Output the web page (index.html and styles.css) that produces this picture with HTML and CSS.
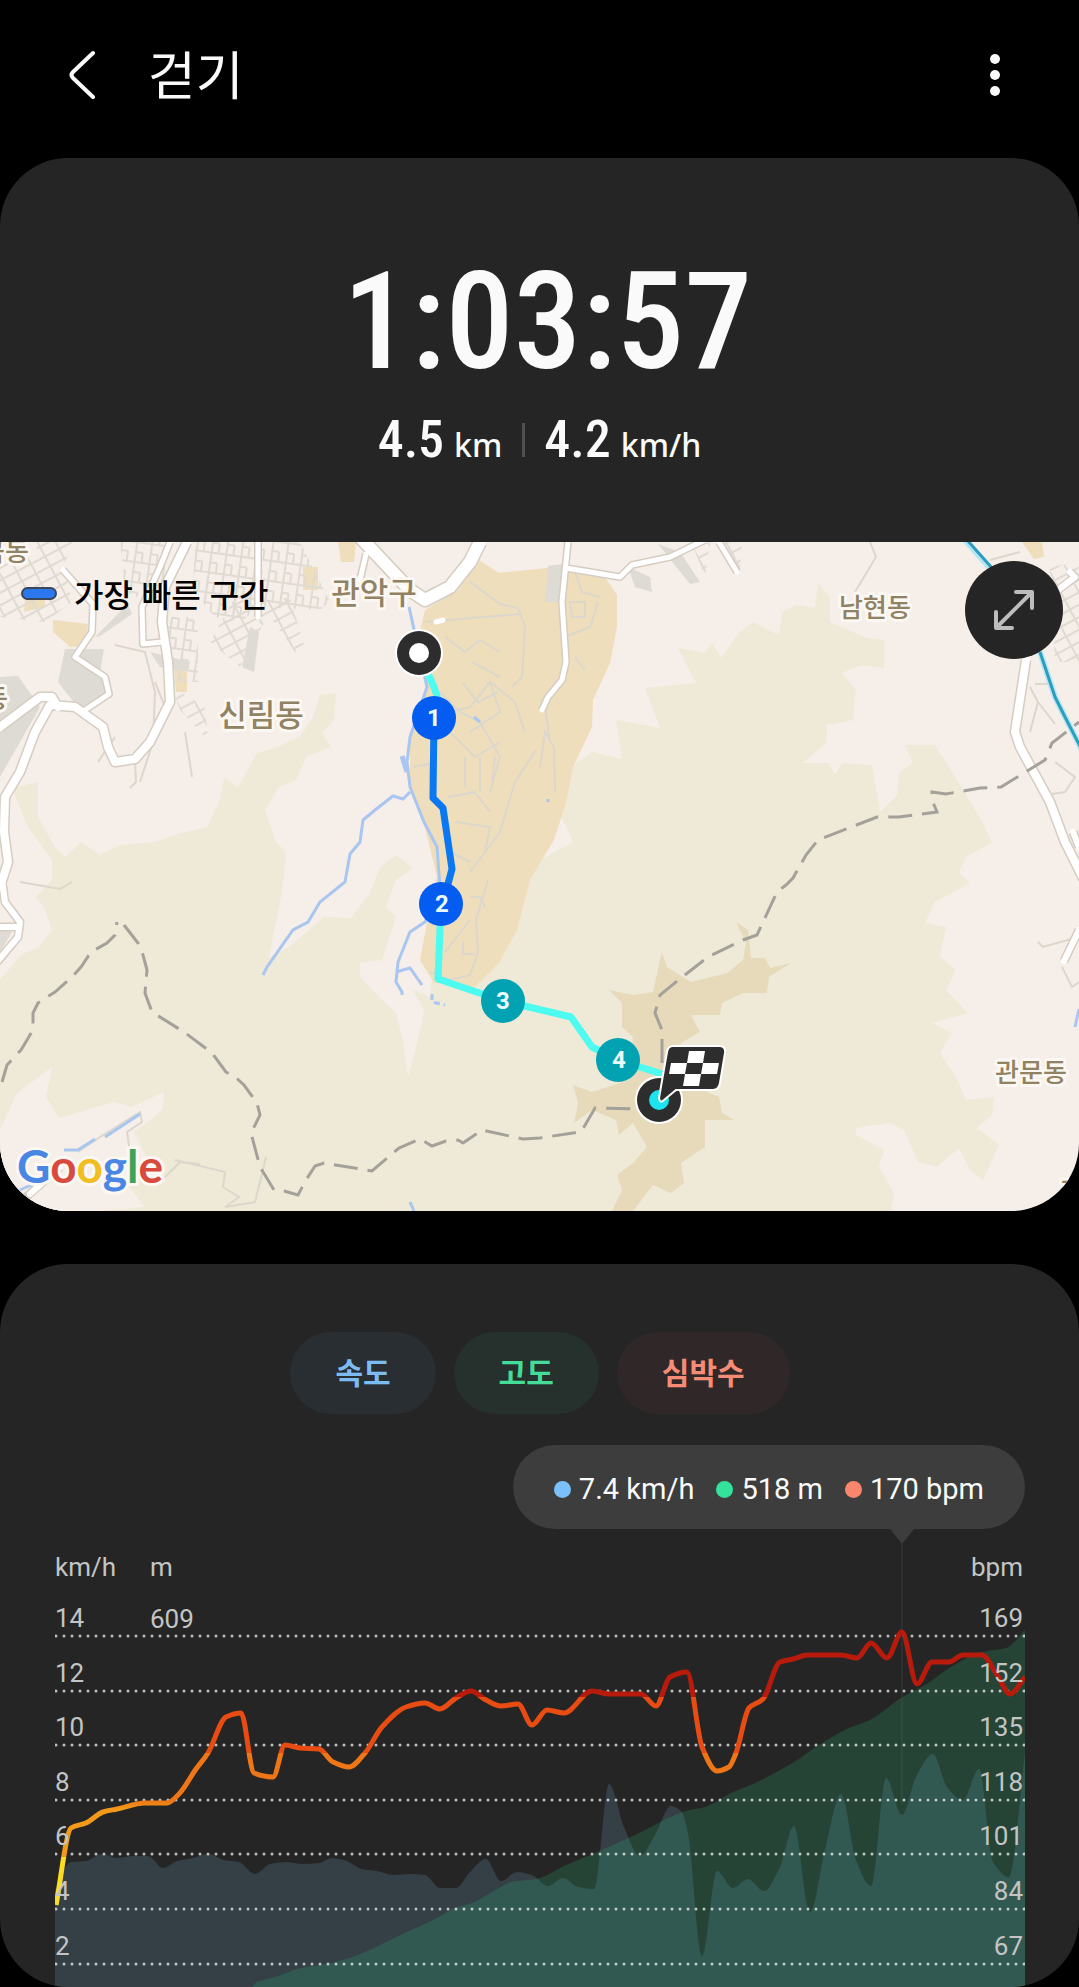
FILE: index.html
```html
<!DOCTYPE html>
<html lang="ko">
<head>
    <meta charset="UTF-8">
    <meta name="viewport" content="width=device-width, initial-scale=1.0">
    <title>걷기</title>
    <link rel="stylesheet" href="styles.css">
</head>
<body>
    <header class="topbar">
        <button class="icon-button" type="button" aria-label="뒤로">
            <svg width="28" height="50" viewBox="0 0 28 50"><path d="M25 3 L5 22 Q2 25 5 28 L25 47" fill="none" stroke="#fafafa" stroke-width="4" stroke-linecap="round" stroke-linejoin="round"/></svg>
        </button>
        <h1>걷기</h1>
        <button class="icon-button more" type="button" aria-label="더보기">
            <svg width="12" height="44" viewBox="0 0 12 44" fill="#fafafa"><circle cx="6" cy="6" r="5"/><circle cx="6" cy="22" r="5"/><circle cx="6" cy="38" r="5"/></svg>
        </button>
    </header>

    <main>
        <section class="card workout">
            <div class="summary">
                <div class="time">1:03:57</div>
                <div class="stats">
                    <div class="stat">4.5 <span>km</span></div>
                    <div class="stat">4.2 <span>km/h</span></div>
                </div>
            </div>

            <div class="map">
                <svg class="map-canvas" viewBox="0 0 1079 669">
                    <defs>
                        <pattern id="streets" width="15" height="20" patternUnits="userSpaceOnUse" patternTransform="rotate(8)">
                            <path d="M0 1H15M1 0V20M0 11H8M8 11V20" fill="none" stroke="#dfdad2" stroke-width="2"/>
                        </pattern>
                        <pattern id="streets2" width="16" height="11" patternUnits="userSpaceOnUse" patternTransform="rotate(-28)">
                            <path d="M0 1H16M1 0V11" fill="none" stroke="#dfdad2" stroke-width="2"/>
                        </pattern>
                    </defs>
                    <rect width="1079" height="669" fill="#f6eee8"/>

                    <!-- forest -->
                    <path fill="#efead7" d="M0 438 L15 420 22 412 38 406 52 388 44 366 36 355 52 338 52 318 28 285 12 246 38 240 38 275 55 305 65 315 81 300 100 313 120 303 155 300 182 291 207 285 220 258 224 236 238 245 257 211 275 206 300 195 313 175 320 153 336 151 334 178 322 191 331 205 306 215 296 238 279 245 265 268 275 298 286 311 284 336 281 355 269 415 289 405 324 375 351 376 370 351 380 325 396 313 413 326 396 338 386 365 396 375 382 418 360 421 360 435 375 451 396 471 403 498 408 535 413 518 422 481 424 468 413 448 430 455 434 420 540 318 573 300 560 271 571 225 592 210 622 217 616 178 660 186 645 146 696 141 678 106 705 111 712 100 721 116 739 91 753 80 779 93 782 70 796 63 815 66 818 41 830 55 830 80 867 96 885 98 884 126 861 123 842 131 856 148 853 178 827 183 827 200 803 221 829 221 835 233 842 221 872 223 880 270 897 253 899 231 913 220 904 203 935 203 951 228 983 281 992 301 966 315 959 331 970 341 935 360 925 381 946 385 940 415 956 428 946 448 968 471 932 481 952 491 940 511 956 535 966 558 994 555 992 573 977 586 999 603 983 638 970 628 959 606 937 625 918 620 904 588 889 581 856 586 856 593 884 608 879 625 894 651 891 669 0 669Z"/>
                    <path fill="#f6eee8" d="M0 588 L17 551 52 525 46 555 59 576 114 560 131 565 164 550 162 568 134 591 150 621 124 638 145 665 100 669 0 669Z"/>
                    <!-- campus -->
                    <path fill="#eedebb" d="M425 68 L458 48 479 18 499 31 547 26 605 35 617 53 617 85 610 121 593 158 592 185 573 225 566 261 554 298 540 321 530 338 517 388 499 421 475 445 434 441 420 418 427 381 437 335 424 281 410 245 410 198 427 145 418 98Z"/>
                    <path fill="#eedebb" d="M303 25H318V48H303Z M338 0H356L354 20 341 20Z M53 78L88 82 86 104 70 105 53 90Z M174 126H187V150H176Z M26 50H45V65L24 70Z M1022 0H1042L1044 15 1034 17Z"/>
                    <!-- summit -->
                    <path fill="#e6dabb" d="M662 410 L667 425 691 440 727 431 743 418 746 401 736 380 748 388 751 416 765 416 770 426 791 421 769 435 767 451 743 451 722 461 720 473 691 473 700 490 681 501 677 538 719 555 722 571 734 578 705 578 705 605 681 621 684 641 671 651 653 643 633 669 612 669 622 648 617 633 633 621 647 605 633 581 619 593 616 578 592 568 574 581 578 561 573 543 592 550 629 538 633 495 622 485 622 461 609 448 633 453 653 450Z"/>
                    <!-- built-up blocks -->
                    <path fill="#dedad4" d="M65 107 L104 107 100 130 112 155 80 168 58 140Z M0 135 L18 134 40 165 0 235Z M548 24 L562 22 562 60 545 60Z M628 25 L650 35 652 50 635 45Z M95 95L128 62 132 72 100 94Z M242 125L250 85 259 90 254 130Z M0 388L12 390 0 410Z M150 110L190 120 188 128 160 125Z M658 2L680 10 700 40 690 42Z"/>
                    <!-- street grids -->
                    <path fill="url(#streets)" d="M195 0 L300 0 330 60 320 68 260 65 240 80 215 75 193 50Z M165 75H198V140H165Z M120 0H165V65L125 50Z"/>
                    <path fill="url(#streets2)" d="M0 20 L60 8 72 60 45 80 0 75Z M30 0H72L62 30Z M210 100L235 55 270 70 240 125Z M260 60L290 55 306 110 295 110Z M692 2L710 0 705 35Z M724 0H742L740 30 735 32Z M1050 25L1079 20V120H1055Z M172 145L205 165 208 198 180 168Z"/>

                    <!-- small streets -->
                    <g fill="none" stroke="#dcd7cc" stroke-width="2">
                        <path d="M425 80L485 75 520 72 M470 40L500 62 518 66 525 85 522 135 512 145 M430 175L470 165 490 140 515 160 525 190 M440 150L460 170 480 180 500 215 490 250 M462 140L478 160 498 150 M450 190L475 215 500 200 M445 95L465 110 480 98 500 110 M472 120L500 135 M413 225L430 222 430 240 M448 255L475 250 490 270 M455 280L490 285 485 310 M470 330L500 290 515 240 536 208 M480 215V250M465 215V245M495 215L492 240 M450 310L470 320 M490 140L500 170 470 190 M540 225L545 190 554 205 555 250 M545 165L550 200"/>
                        <path d="M488 338L476 378 478 410 470 433 450 438 430 430 M445 410L470 378 M463 400V412H474 M470 355H480L485 365"/>
                        <path d="M565 95L590 85 598 60 M575 30L582 50 600 55 M570 60H585V75H572Z M575 115L585 128"/>
                        <path d="M115 103L145 110 155 150 153 200 140 240 M185 190L192 235 M115 195L98 220 M135 220L136 240 130 246 M155 140L165 165"/>
                        <path d="M870 0L876 15 855 50 M1030 145L1038 160 1030 190 M1038 160L1055 182 M1035 142H1050 M990 18L1020 10 M1055 220L1075 235 1065 250 1052 252"/>
                        <path d="M1038 400L1043 405 1075 396 M1062 425L1072 445 1079 440"/>
                        <path d="M20 340L60 347 72 340 M165 635L180 620 200 622 M175 618L225 630 223 645 239 655 225 665 255 660 266 615"/>
                        <path d="M78 610L100 595 140 570 142 580 127 590 130 610"/>
                    </g>

                    <!-- water -->
                    <g fill="none" stroke="#a9c6f1" stroke-width="3">
                        <path d="M409 65 L427 145 410 195 407 220 410 245 424 280 437 305 440 345 425 380 410 390 398 420 396 440 402 450 402 453"/>
                        <path d="M410 250L403 257 393 254 375 268 363 278 360 300 350 312 345 340 320 360 308 380 293 388 267 425 263 433"/>
                        <path d="M396 430L410 426 422 443"/>
                        <path d="M432 452V460L445 463" stroke-dasharray="6 4"/>
                        <path d="M402 214L407 230" stroke-width="5"/>
                        <path d="M105 595L140 572 M64 608H78L95 597 M20 648L60 630"/>
                        <path d="M474 175L480 180M548 257V260M410 660L414 669M1079 467L1075 485"/>
                    </g>

                    <!-- main roads: casing then fill -->
                    <g fill="none" stroke="#d5cdc2" stroke-linejoin="round">
                        <path stroke-width="11" d="M187 0 L165 45 162 80 168 120 170 160 150 200 135 217 115 220 108 205 103 185 75 165 50 163 35 190 20 230 5 255 4 290 8 320 0 345 M0 185L40 155 52 155 58 165"/>
                        <path stroke-width="15" d="M360 -5 L410 48 425 58 450 45 470 20 480 0"/>
                        <path stroke-width="8" d="M63 28 L93 62 92 90 75 115 105 135 109 152 85 168 M170 0L160 25 142 65 143 102 162 100 M258 0V75 M366 12L360 38"/>
                        <path stroke-width="8" d="M568 0 L562 60 566 120 562 138 548 155 542 168 M566 26L620 35 632 23 670 15 705 -2 M719 0L737 30"/>
                        <path stroke-width="11" d="M1026 118 L1015 190 1020 205 1050 260 1065 300 1085 340"/>
                        <path stroke-width="9" d="M1058 48L1075 35 1070 30 M2 338L5 360 20 380 18 395 -3 420 M-3 385H17 M1079 388L1064 419 M1073 290L1079 305"/>
                        <path stroke-width="9" d="M25 656L60 625"/>
                    </g>
                    <g fill="none" stroke="#ffffff" stroke-linejoin="round" stroke-linecap="round">
                        <path stroke-width="8" d="M187 0 L165 45 162 80 168 120 170 160 150 200 135 217 115 220 108 205 103 185 75 165 50 163 35 190 20 230 5 255 4 290 8 320 0 345 M0 185L40 155 52 155 58 165"/>
                        <path stroke-width="12" d="M360 -5 L410 48 425 58 450 45 470 20 480 0"/>
                        <path stroke-width="5" d="M63 28 L93 62 92 90 75 115 105 135 109 152 85 168 M170 0L160 25 142 65 143 102 162 100 M258 0V75 M366 12L360 38 M436 80L443 78"/>
                        <path stroke-width="5" d="M568 0 L562 60 566 120 562 138 548 155 542 168 M566 26L620 35 632 23 670 15 705 -2 M719 0L737 30"/>
                        <path stroke-width="8" d="M1026 118 L1015 190 1020 205 1050 260 1065 300 1085 340"/>
                        <path stroke-width="6" d="M1058 48L1075 35 1070 30 M2 338L5 360 20 380 18 395 -3 420 M-3 385H17 M1079 388L1064 419 M1073 290L1079 305"/>
                        <path stroke-width="6" d="M30 652L60 625"/>
                    </g>

                    <!-- subway line -->
                    <g fill="none">
                        <path d="M965 -2L990 26 M1040 110L1055 155 1065 175 1083 210" stroke="#b5e6f5" stroke-width="6"/>
                        <path d="M967 -2L992 26 M1040 110L1055 155 1065 175 1083 210" stroke="#2b9dbd" stroke-width="3"/>
                    </g>

                    <!-- district borders -->
                    <g fill="none" stroke="#a3a199" stroke-width="3" stroke-dasharray="24 10">
                        <path d="M2 540 L7 523 21 508 33 488 33 471 38 461 55 450 72 435 81 425 91 410 107 401 115 393 117 380"/>
                        <path d="M124 383 L138 401 143 413 147 428 145 451 152 470 184 490 212 511 226 530 234 534 244 543 257 561 260 573 251 591 260 625 274 648 284 649 298 653 306 638 315 624 324 621 372 629 399 606 420 597 432 604 446 599 458 598 463 601 482 588 523 597 540 596 573 591 581 590 595 566 636 567 662 558"/>
                        <path d="M662 521 L662 488 655 471 660 453 681 436 708 415 743 398 757 393 777 350 786 343 793 336 806 313 818 298 877 275 899 275 937 270 932 258 932 250 946 252 980 246 1001 245 1045 218 1052 201 1079 180"/>
                    </g>

                    <g class="place">
                        <text x="374" y="62" font-size="31">관악구</text>
                        <text x="261" y="184" font-size="31">신림동</text>
                        <text x="875" y="75" font-size="26">남현동</text>
                        <text x="1031" y="540" font-size="26">관문동</text>
                        <text x="5" y="19" font-size="26">곡동</text>
                        <text x="-4" y="166" font-size="26">동</text>
                        <text x="1084" y="658" font-size="26">과천</text>
                    </g>

                    <!-- walked route -->
                    <g fill="none" stroke-width="7" stroke-linejoin="round">
                        <path d="M419 111L434 145 439 160 M441 362L438 437 503 459 571 475 592 505 618 518 662 532" stroke="#4dfbf0"/>
                        <path d="M434 176L433 256 443 266 452 327 448 342 441 362" stroke="#0b78f2"/>
                    </g>
                    <circle cx="419" cy="111" r="24" fill="#fff"/>
                    <circle cx="419" cy="111" r="22" fill="#2d2d2d"/>
                    <circle cx="419" cy="111" r="10" fill="#fff"/>
                    <circle cx="659" cy="558" r="24" fill="#fff"/>
                    <circle cx="659" cy="558" r="22" fill="#2d2d2d"/>
                    <circle cx="659" cy="558" r="10" fill="#1de3f0"/>
                    <path d="M673 504 H719 Q726 504 725 511 L720 541 Q719 548 713 548 H676 L664 558 Q660 562 659 556 L667 510 Q668 504 673 504Z" fill="#2d2d2d" stroke="#fff" stroke-width="2"/>
                    <path fill="#fff" d="M689 509H705L703 521H687Z M671 521H687L685 532H669Z M703 521H719L717 532H701Z M685 532H701L699 544H683Z"/>
                    <g class="pin">
                        <circle cx="434" cy="176" r="22" fill="#055cf0"/>
                        <circle cx="441" cy="362" r="22" fill="#055cf0"/>
                        <circle cx="503" cy="459" r="22" fill="#02a2b3"/>
                        <circle cx="618" cy="518" r="22" fill="#02a2b3"/>
                        <text x="434" y="184">1</text>
                        <text x="442" y="370">2</text>
                        <text x="503" y="467">3</text>
                        <text x="619" y="526">4</text>
                    </g>
                </svg>

                <div class="legend"><span class="legend-line"></span>가장 빠른 구간</div>
                <button class="expand" type="button" aria-label="지도 확대">
                    <svg width="42" height="42" viewBox="0 0 42 42"><path d="M4 38L38 4M23 3H39V19M3 23V39H19" fill="none" stroke="#bdbdbd" stroke-width="4" stroke-linecap="round" stroke-linejoin="round"/></svg>
                </button>
                <div class="google"><span class="b">G</span><span class="r">o</span><span class="y">o</span><span class="b">g</span><span class="g">l</span><span class="r">e</span></div>
            </div>
        </section>

        <section class="card graph">
            <div class="chips">
                <button class="chip speed" type="button">속도</button>
                <button class="chip altitude" type="button">고도</button>
                <button class="chip heart" type="button">심박수</button>
            </div>

            <div class="tooltip">
                <span class="value speed">7.4 km/h</span>
                <span class="value altitude">518 m</span>
                <span class="value heart">170 bpm</span>
            </div>

            <svg class="chart" viewBox="0 0 970 458">
                <defs>
                    <linearGradient id="zones" gradientUnits="userSpaceOnUse" x1="0" y1="0" x2="0" y2="400">
                        <stop offset="0.42" stop-color="#b81b0b"/>
                        <stop offset="0.42" stop-color="#e84c12"/>
                        <stop offset="0.56" stop-color="#e84c12"/>
                        <stop offset="0.56" stop-color="#ef7616"/>
                        <stop offset="0.68" stop-color="#ef7616"/>
                        <stop offset="0.7" stop-color="#f39a1a"/>
                        <stop offset="0.82" stop-color="#f39a1a"/>
                        <stop offset="0.82" stop-color="#fadd22"/>
                    </linearGradient>
                </defs>
                <path d="M847 15V275" stroke="#3a3a3a" stroke-width="1"/>
                <path id="speedArea" fill="#343f46"/>
                <path id="altitudeArea" fill="#2ae48c" fill-opacity="0.16"/>
                <g id="gridLines"></g>
                <path id="heartLine" fill="none" stroke="url(#zones)" stroke-width="5" stroke-linejoin="round"/>
                <g id="axisLabels">
                    <text x="0" y="47">km/h</text>
                    <text x="95" y="47">m</text>
                    <text x="95" y="99">609</text>
                    <text class="end" x="968" y="47">bpm</text>
                </g>
            </svg>
        </section>
    </main>

    <script>
        const svgNS = 'http://www.w3.org/2000/svg';
        const chartBottom = 458;

        const heart = [[1,376],[16,299],[31,294],[48,283],[62,280],[90,274],[112,274],[124,265],[141,240],[153,224],[171,188],[186,184],[199,244],[218,248],[230,216],[245,219],[264,220],[278,233],[294,238],[310,224],[327,198],[351,178],[370,174],[385,180],[401,169],[416,162],[431,171],[446,177],[463,175],[477,196],[492,181],[509,184],[537,162],[554,165],[586,165],[601,177],[615,148],[632,143],[647,218],[662,242],[674,238],[681,224],[694,179],[708,170],[725,133],[738,130],[753,126],[786,126],[802,129],[816,114],[832,129],[847,103],[862,155],[877,133],[894,133],[908,126],[927,126],[942,146],[955,165],[970,148]];
        const speed = [[0,361],[12,336],[16,333],[31,332],[47,325],[62,329],[78,327],[93,327],[108,339],[122,332],[138,329],[153,325],[169,331],[184,333],[200,345],[215,335],[231,333],[248,335],[264,334],[277,329],[289,331],[307,340],[322,342],[338,346],[355,345],[370,346],[385,359],[401,359],[415,343],[431,330],[446,352],[462,343],[477,346],[493,357],[508,349],[523,358],[539,360],[554,255],[569,298],[585,327],[600,306],[616,277],[626,282],[633,304],[647,427],[662,342],[678,359],[693,350],[709,362],[725,338],[739,297],[755,383],[770,321],[786,265],[801,331],[816,357],[831,249],[847,286],[861,248],[878,225],[892,258],[908,271],[924,240],[938,333],[954,348],[970,224]];
        const altitude = [[197,458],[202,453],[220,448],[246,439],[272,435],[303,426],[341,408],[382,389],[400,379],[417,374],[434,365],[460,352],[475,351],[485,349],[509,337],[540,324],[578,307],[631,282],[650,278],[678,263],[698,255],[739,233],[767,214],[794,199],[815,191],[846,169],[873,154],[894,139],[927,123],[951,119],[970,101]];

        // smooth curve that never overshoots its points
        function curve(points) {
            const slopes = points.map((p, i) => {
                if (i === 0 || i === points.length - 1) return null;
                const a = (p[1] - points[i - 1][1]) / (p[0] - points[i - 1][0]);
                const b = (points[i + 1][1] - p[1]) / (points[i + 1][0] - p[0]);
                return a * b <= 0 ? 0 : 2 * a * b / (a + b);
            });
            let d = 'M' + points[0];
            for (let i = 1; i < points.length; i++) {
                const [x0, y0] = points[i - 1];
                const [x1, y1] = points[i];
                const h = (x1 - x0) / 3;
                const line = (y1 - y0) / (x1 - x0);
                const s0 = slopes[i - 1] === null ? line : slopes[i - 1];
                const s1 = slopes[i] === null ? line : slopes[i];
                d += ` C${x0 + h} ${y0 + s0 * h} ${x1 - h} ${y1 - s1 * h} ${x1} ${y1}`;
            }
            return d;
        }

        function area(points) {
            return curve(points) + `V${chartBottom}H${points[0][0]}Z`;
        }

        document.getElementById('heartLine').setAttribute('d', curve(heart));
        document.getElementById('speedArea').setAttribute('d', area(speed));
        document.getElementById('altitudeArea').setAttribute('d', area(altitude));

        const gridLines = document.getElementById('gridLines');
        const axisLabels = document.getElementById('axisLabels');

        function addLabel(x, y, text, className) {
            const label = document.createElementNS(svgNS, 'text');
            label.setAttribute('x', x);
            label.setAttribute('y', y);
            label.setAttribute('class', className);
            label.textContent = text;
            axisLabels.appendChild(label);
        }

        for (let i = 0; i < 7; i++) {
            const y = Math.round(107 + i * 54.6);
            const line = document.createElementNS(svgNS, 'path');
            line.setAttribute('d', `M1 ${y}H970`);
            gridLines.appendChild(line);
            addLabel(0, y - 9, 14 - i * 2, 'start');
            addLabel(968, y - 9, 169 - i * 17, 'end');
        }
    </script>
</body>
</html>
```
FILE: styles.css
```css
* {
    box-sizing: border-box;
}
body {
    margin: 0;
    background: #000;
    color: #fafafa;
    font-family: Roboto, "Noto Sans CJK KR", sans-serif;
}
button {
    border: none;
    padding: 0;
    background: none;
    font-family: inherit;
    cursor: pointer;
}
svg {
    display: block;
}
.topbar {
    display: flex;
    align-items: center;
    height: 158px;
    padding: 0 78px 8px 68px;
}
.topbar h1 {
    margin: 0 0 0 52px;
    padding-bottom: 4px;
    font-family: "Noto Sans CJK KR", sans-serif;
    font-size: 52px;
    font-weight: 400;
    line-height: 60px;
}
.more {
    margin-left: auto;
}
.card {
    background: #252525;
    border-radius: 68px;
    overflow: hidden;
}
.summary {
    height: 384px;
    padding-top: 94px;
    text-align: center;
}
.time {
    padding-left: 16px;
    font-family: "Roboto Condensed", "Liberation Sans Narrow", "Liberation Sans", sans-serif;
    font-size: 136px;
    font-weight: 500;
    line-height: 140px;
}
.stats {
    display: flex;
    justify-content: center;
    align-items: center;
    margin-top: 16px;
    font-family: "Roboto Condensed", "Noto Sans", sans-serif;
}
.stat {
    display: flex;
    align-items: baseline;
    gap: 10px;
    font-size: 52px;
    font-weight: 500;
    line-height: 64px;
}
.stat span {
    font-family: "Noto Sans", sans-serif;
    font-size: 32px;
}
.stat + .stat::before {
    content: "";
    width: 3px;
    height: 34px;
    margin: 0 9px 0 20px;
    background: #505050;
}
.map {
    position: relative;
}
.map-canvas {
    width: 100%;
    height: auto;
}
.place {
    font-family: "Noto Sans CJK KR", sans-serif;
    font-weight: 500;
    fill: #908263;
    stroke: #fbf7f2;
    stroke-width: 6px;
    stroke-linejoin: round;
    paint-order: stroke;
    text-anchor: middle;
}
.pin {
    font-size: 24px;
    font-weight: 700;
    text-anchor: middle;
}
.pin text {
    fill: #e9fbff;
}
.legend {
    position: absolute;
    top: 28px;
    left: 21px;
    display: flex;
    align-items: center;
    gap: 17px;
    color: #000;
    font-family: "Noto Sans CJK KR", sans-serif;
    font-size: 32px;
    font-weight: 500;
    line-height: 46px;
}
.legend-line {
    width: 36px;
    height: 13px;
    border: 2px solid #38475c;
    border-radius: 7px;
    background: #2a77ee;
}
.expand {
    position: absolute;
    top: 19px;
    right: 16px;
    display: flex;
    align-items: center;
    justify-content: center;
    width: 98px;
    height: 98px;
    border-radius: 50%;
    background: #252525;
}
.google {
    position: absolute;
    left: 17px;
    bottom: 17px;
    font-family: Lato, sans-serif;
    font-size: 46px;
    font-weight: 700;
    line-height: 56px;
    -webkit-text-stroke: 6px #fbf8f4;
    paint-order: stroke;
}
.google .b {
    color: #4a86e4;
}
.google .r {
    color: #d84a3e;
}
.google .y {
    color: #f0bd22;
}
.google .g {
    color: #3fa35a;
}
.graph {
    margin-top: 53px;
    padding: 68px 54px 0 55px;
}
.chips {
    display: flex;
    justify-content: center;
    gap: 18px;
}
.chip {
    height: 82px;
    padding: 0 45px 4px;
    border-radius: 41px;
    font-family: "Noto Sans CJK KR", sans-serif;
    font-size: 30px;
    font-weight: 700;
}
.chip.speed {
    background: #292e32;
    color: #7dbcf3;
}
.chip.altitude {
    background: #26302c;
    color: #45db99;
}
.chip.heart {
    background: #302828;
    color: #f68b76;
}
.tooltip {
    position: relative;
    display: flex;
    align-items: center;
    gap: 22px;
    width: fit-content;
    height: 84px;
    margin: 31px 0 0 auto;
    padding: 4px 41px 0;
    border-radius: 42px;
    background: #3d3d3d;
    font-size: 29px;
}
.tooltip::after {
    content: "";
    position: absolute;
    top: 100%;
    right: 111px;
    border: 12px solid transparent;
    border-top: 15px solid #3d3d3d;
    border-bottom: none;
}
.value {
    display: flex;
    align-items: center;
    gap: 8px;
}
.value::before {
    content: "";
    width: 17px;
    height: 17px;
    border-radius: 50%;
}
.value.speed::before {
    background: #7ac0fb;
}
.value.altitude::before {
    background: #33e39b;
}
.value.heart::before {
    background: #fb866d;
}
.chart {
    width: 100%;
    height: auto;
}
#gridLines path {
    fill: none;
    stroke: #fff;
    stroke-opacity: 0.7;
    stroke-width: 3;
    stroke-linecap: round;
    stroke-dasharray: 0 8;
}
#axisLabels {
    fill: #c3c5c4;
    font-size: 26px;
}
#axisLabels .end {
    text-anchor: end;
}
```
